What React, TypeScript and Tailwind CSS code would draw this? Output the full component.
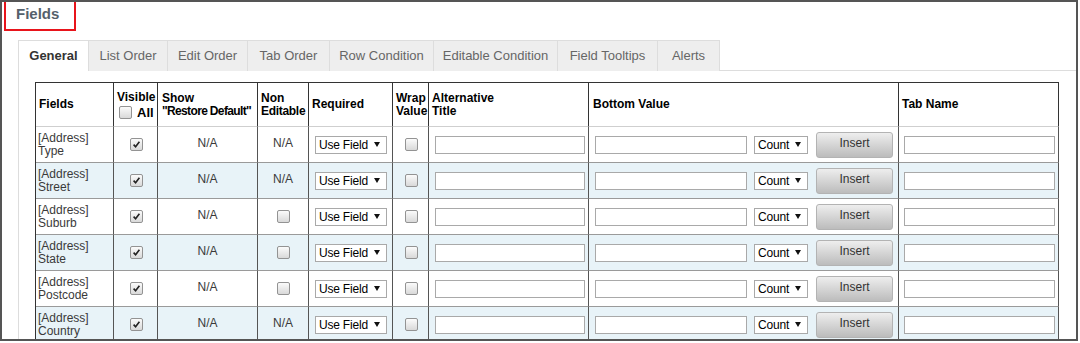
import React from "react";

function Cb({ checked }: { checked?: boolean }) {
  return (
    <span className="inline-flex w-[13px] h-[13px] items-center justify-center rounded-[2px] border border-[#939393] bg-linear-to-b from-[#fbfbfb] to-[#d9d9d9] align-middle">
      {checked && (
        <svg width="9" height="9" viewBox="0 0 9 9">
          <path d="M1.6 4.6 L3.6 6.8 L7.4 1.8" stroke="#222" strokeWidth="1.6" fill="none" />
        </svg>
      )}
    </span>
  );
}

function Sel({ label, cls }: { label: string; cls: string }) {
  return (
    <div className={`inline-flex items-center h-[18px] border border-[#a9a9a9] bg-white pl-[3px] text-[12px] text-black leading-none ${cls}`}>
      <span className="tracking-[-0.2px]">{label}</span>
      <svg className="ml-auto mr-[6px]" width="6" height="5" viewBox="0 0 6 5">
        <path d="M0 0 H6 L3 5 Z" fill="#111" />
      </svg>
    </div>
  );
}

function Inp({ cls }: { cls: string }) {
  return <div className={`h-[18px] border border-[#a9a9a9] bg-white ${cls}`} />;
}

const rows = [
  { a: "Type", ne: "na" },
  { a: "Street", ne: "na" },
  { a: "Suburb", ne: "cb" },
  { a: "State", ne: "cb" },
  { a: "Postcode", ne: "cb" },
  { a: "Country", ne: "na" },
];

const tabs = [
  { t: "General", w: "w-[71px]" },
  { t: "List Order", w: "w-[79px]" },
  { t: "Edit Order", w: "w-[80px]" },
  { t: "Tab Order", w: "w-[82px]" },
  { t: "Row Condition", w: "w-[104px]" },
  { t: "Editable Condition", w: "w-[124px]" },
  { t: "Field Tooltips", w: "w-[100px]" },
  { t: "Alerts", w: "w-[62px]" },
];

export default function App() {
  const th = "border-r border-b border-r-[#333] border-b-[#cfcfcf] text-left align-middle font-bold text-[12px] leading-[13px] text-black px-[3px] whitespace-nowrap overflow-hidden";
  const td = "border-r border-b border-r-[#555] border-b-[#9a9a9a] align-middle p-0 text-[12px] leading-[13px] text-[#3a3a3a]";
  return (
    <div className="w-[1080px] h-[343px] bg-white font-['Liberation_Sans',Arial,sans-serif]">
      <div className="w-[1078px] h-[341px] border-2 border-[#555] overflow-hidden flex flex-col">
        <div className="ml-[2px] w-[72px] h-[29px] shrink-0 border-2 border-t-0 border-[#e8141b] pl-[10px] pt-[3px]">
          <span className="block text-[15px] leading-[18px] font-bold text-[#55616c]">Fields</span>
        </div>
        <div className="ml-[16px] mt-[9px] flex flex-col flex-1">
          <div className="flex h-[31px] border-b border-[#dddddd]">
            {tabs.map((t, i) => (
              <div
                key={t.t}
                className={`${t.w} h-[31px] flex items-center justify-center border-t border-r border-[#dddddd] text-[13px] ${
                  i === 0 ? "border-l bg-white font-bold text-[#333]" : "bg-[#eeeeee] text-[#666]"
                }`}
              >
                {t.t}
              </div>
            ))}
          </div>
          <div className="flex-1 border-l border-[#dddddd] pl-[16px] pt-[11px]">
            <table className="table-fixed w-[1023px] border-separate border-spacing-0 border-l border-t border-[#333]">
              <colgroup>
                <col className="w-[78px]" />
                <col className="w-[44px]" />
                <col className="w-[100px]" />
                <col className="w-[51px]" />
                <col className="w-[84px]" />
                <col className="w-[36px]" />
                <col className="w-[160px]" />
                <col className="w-[310px]" />
                <col className="w-[160px]" />
              </colgroup>
              <thead>
                <tr className="h-[44px]">
                  <th className={th}>Fields</th>
                  <th className={`${th} px-[2px]`}>
                    Visible
                    <div className="flex items-center gap-[5px] mt-[2px] pl-[2px]">
                      <Cb />
                      <span className="text-[13px]">All</span>
                    </div>
                  </th>
                  <th className={`${th} pl-[4px] pr-0`}>
                    Show
                    <br />
                    <span className="tracking-[-0.65px]">"Restore Default"</span>
                  </th>
                  <th className={`${th} px-[2px]`}>
                    Non
                    <br />
                    <span className="tracking-[-0.3px]">Editable</span>
                  </th>
                  <th className={th}>Required</th>
                  <th className={`${th} px-[2px]`}>
                    Wrap
                    <br />
                    Value
                  </th>
                  <th className={th}>
                    Alternative
                    <br />
                    Title
                  </th>
                  <th className={`${th} px-[4px]`}>Bottom Value</th>
                  <th className={th}>Tab Name</th>
                </tr>
              </thead>
              <tbody>
                {rows.map((r, i) => (
                  <tr key={r.a} className={`h-[36px] ${i % 2 === 1 ? "bg-[#e8f3f8]" : "bg-white"}`}>
                    <td className={`${td} pl-[2px]`}>
                      [Address]
                      <br />
                      {r.a}
                    </td>
                    <td className={`${td} text-center`}>
                      <div className="flex justify-center pl-[1px]">
                        <Cb checked />
                      </div>
                    </td>
                    <td className={`${td} text-center pb-[2px]`}>N/A</td>
                    <td className={`${td} text-center`}>
                      {r.ne === "na" ? (
                        <span className="block pb-[2px]">N/A</span>
                      ) : (
                        <div className="flex justify-center">
                          <Cb />
                        </div>
                      )}
                    </td>
                    <td className={td}>
                      <div className="pl-[6px] flex">
                        <Sel label="Use Field" cls="w-[72px]" />
                      </div>
                    </td>
                    <td className={td}>
                      <div className="flex justify-center pl-[1px]">
                        <Cb />
                      </div>
                    </td>
                    <td className={td}>
                      <div className="pl-[6px]">
                        <Inp cls="w-[150px]" />
                      </div>
                    </td>
                    <td className={td}>
                      <div className="flex items-center pl-[6px]">
                        <Inp cls="w-[152px]" />
                        <Sel label="Count" cls="w-[54px] ml-[7px]" />
                        <div className="ml-[8px] w-[77px] h-[26px] rounded-[3px] border border-[#b3b3b3] bg-linear-to-b from-[#eeeeee] to-[#bcbcbc] flex justify-center pt-[3px] text-[12px] leading-[14px] text-[#333]">
                          Insert
                        </div>
                      </div>
                    </td>
                    <td className={td}>
                      <div className="pl-[5px]">
                        <Inp cls="w-[151px]" />
                      </div>
                    </td>
                  </tr>
                ))}
              </tbody>
            </table>
          </div>
        </div>
      </div>
    </div>
  );
}
